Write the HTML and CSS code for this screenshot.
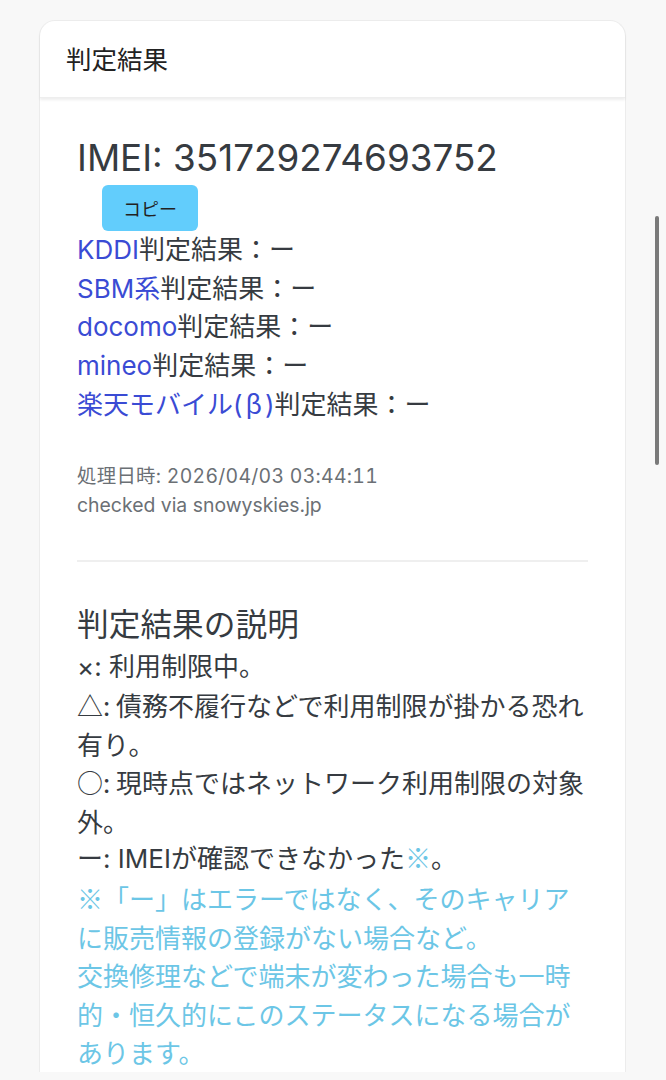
FILE: index.html
```html
<!DOCTYPE html>
<html lang="ja">
<head>
<meta charset="utf-8">
<title>判定結果</title>
<link rel="stylesheet" href="styles.css">
</head>
<body>
<div class="card">
  <div class="card-header">判定結果</div>
  <div class="card-body">
    <h2 class="imei">IMEI: 351729274693752</h2>
    <button class="copy-btn">コピー</button>
    <div class="results">
      <div><a class="carrier">KDDI</a>判定結果：ー</div>
      <div><a class="carrier">SBM系</a>判定結果：ー</div>
      <div><a class="carrier">docomo</a>判定結果：ー</div>
      <div><a class="carrier">mineo</a>判定結果：ー</div>
      <div><a class="carrier">楽天モバイル(<span class="cjk greek">β</span>)</a>判定結果：ー</div>
    </div>
    <div class="meta">
      <div class="timestamp">処理日時: 2026/04/03 03:44:11</div>
      <div>checked via snowyskies.jp</div>
    </div>
    <hr class="divider">
    <h3 class="legend-title">判定結果の説明</h3>
    <div class="legend">
      <div>×: 利用制限中。</div>
      <div class="cjk-line">△: 債務不履行などで利用制限が掛かる恐れ有り。</div>
      <div class="cjk-line">○: 現時点ではネットワーク利用制限の対象外。</div>
      <div>ー: IMEIが確認できなかった<span class="note cjk">※</span>。</div>
      <div class="note cjk-line">※「ー」はエラーではなく、そのキャリアに販売情報の登録がない場合など。<br>交換修理などで端末が変わった場合も一時的・恒久的にこのステータスになる場合があります。</div>
    </div>
  </div>
</div>
<div class="scrollbar"></div>
</body>
</html>
```

FILE: styles.css
```css
html, body {
  margin: 0;
  padding: 0;
}
body {
  background: #f8f8f8;
  font-family: "Inter", "Noto Sans CJK JP", sans-serif;
  color: #363b41;
  overflow: hidden;
  height: 1080px;
}
.cjk {
  font-family: "Noto Sans CJK JP", sans-serif;
  line-height: 1;
}
.cjk-line {
  font-family: "Noto Sans CJK JP", sans-serif;
}
.greek {
  padding: 0 3px;
}
.card {
  margin: 20px 40px 0 39px;
  background: #fff;
  border: 1px solid #ececec;
  border-bottom: none;
  border-radius: 16px 16px 0 0;
}
.card-header {
  height: 72px;
  padding: 0 0 4px 26px;
  display: flex;
  align-items: center;
  font-size: 25.5px;
  color: #222;
  border-radius: 16px 16px 0 0;
  box-shadow: 0 2px 3px rgba(0, 0, 0, 0.07);
  border-bottom: 1px solid #eeeeee;
}
.card-body {
  padding: 37px 37px 0 37px;
}
.imei {
  margin: 0;
  font-size: 36.8px;
  font-weight: 400;
  line-height: 45px;
  color: #363b41;
}
.copy-btn {
  display: block;
  margin: 5px 0 0 25px;
  width: 96px;
  height: 46px;
  border: none;
  border-radius: 6px;
  background: #62cdfc;
  color: #222;
  font-family: "Noto Sans CJK JP", sans-serif;
  font-size: 18px;
  padding: 0;
}
.results {
  font-size: 26px;
  line-height: 38.7px;
}
.carrier {
  color: #3a4bd4;
}
.meta {
  margin-top: 37px;
  font-size: 19.4px;
  line-height: 29px;
  color: #6b7075;
}
.timestamp {
  font-variant-numeric: tabular-nums;
  letter-spacing: 0.3px;
}
.divider {
  margin: 40px 0 0 0;
  border: none;
  border-top: 2px solid #efefef;
}
.legend-title {
  margin: 40px 0 0 0;
  font-size: 31.7px;
  font-weight: 400;
  line-height: 46px;
  color: #363b41;
}
.legend {
  font-size: 26px;
  line-height: 38.6px;
}
.note {
  color: #6cc6e6;
}
.scrollbar {
  position: fixed;
  right: 7px;
  top: 216px;
  width: 4px;
  height: 249px;
  border-radius: 2px;
  background: #7a7a7a;
}
```
